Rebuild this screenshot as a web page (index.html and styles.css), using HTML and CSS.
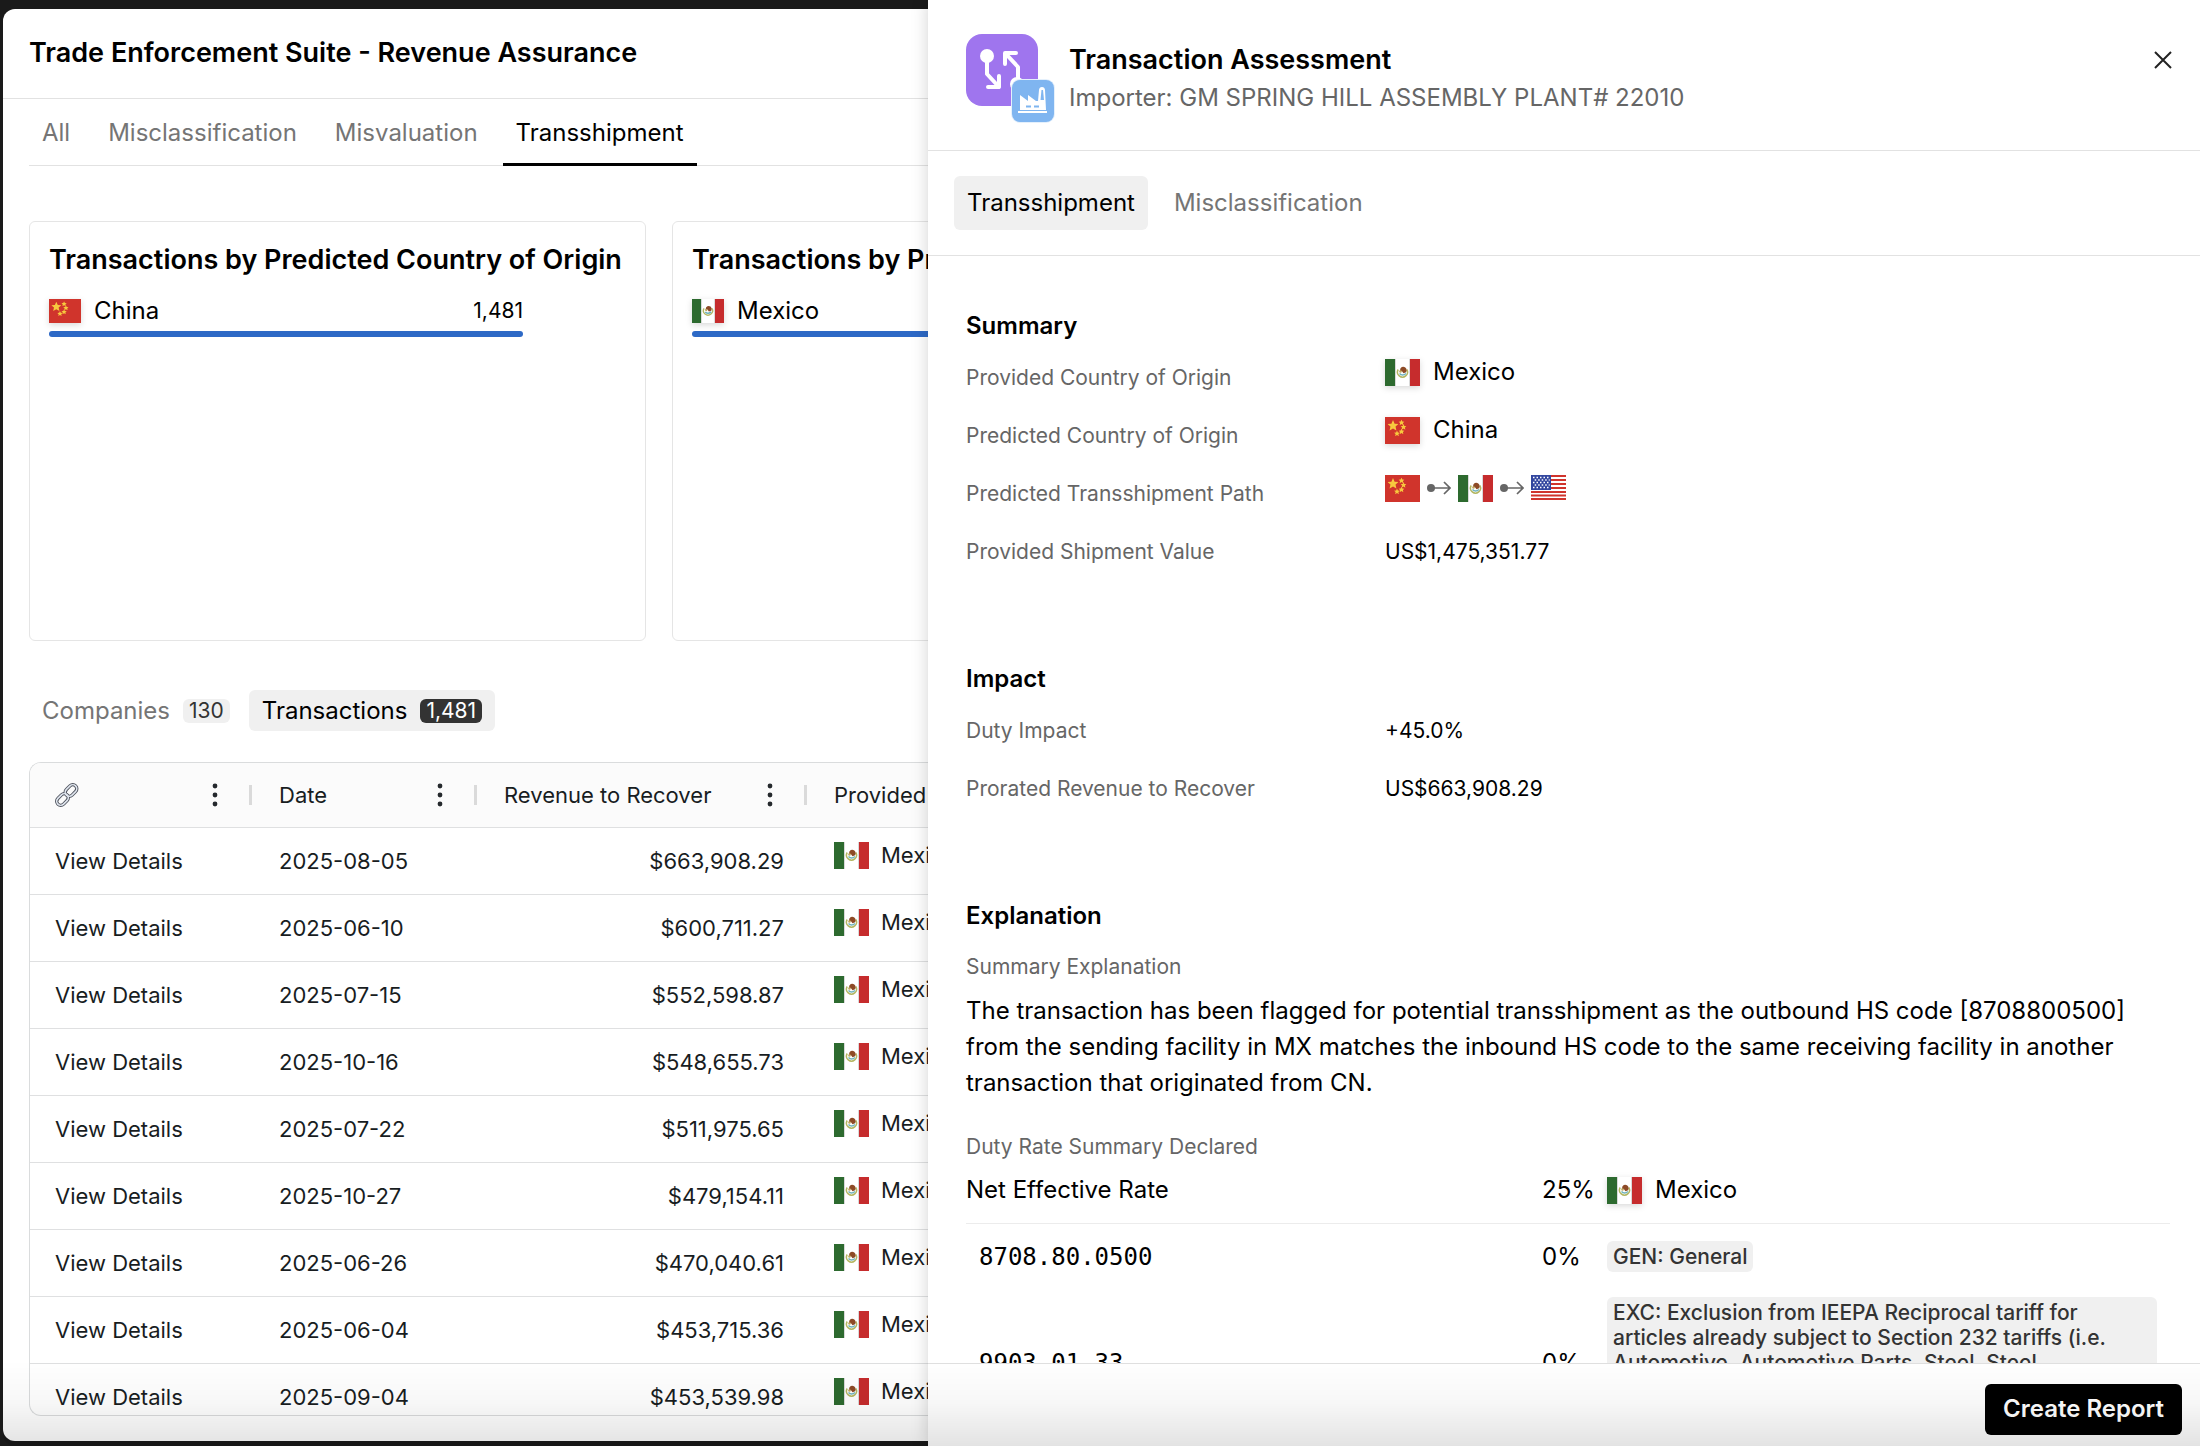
FILE: index.html
```html
<!DOCTYPE html>
<html lang="en">
<head>
<meta charset="utf-8">
<title>Trade Enforcement Suite - Revenue Assurance</title>
<link rel="stylesheet" href="styles.css">
</head>
<body>
<svg class="defs" aria-hidden="true">
  <symbol id="flag-mx" viewBox="0 0 35 27" preserveAspectRatio="none">
    <path fill="#fff" d="M0 0h35v27H0z"/>
    <path fill="#2d6a2f" d="M0 0h10v27H0z"/>
    <path fill="#c62c2d" d="M25 0h10v27H25z"/>
    <path d="M10 0h1v27h-1zM24 0h1v27h-1z" fill="#d9d9d9"/>
    <path d="M13.200 10.500a5 5 0 1 0 8.600 0" fill="none" stroke="#b3b661" stroke-width="1.500"/>
    <path d="M14.500 14.500q3 3 6.500 0" fill="none" stroke="#6fb3bd" stroke-width="1.600"/>
    <path d="M15.500 9.200q2.200-2.400 4.800-.8 2.200 2 .8 4.800l-2.600 1-1.700-2.300-2 .3z" fill="#8d4a26"/>
    <circle cx="15.500" cy="12.500" r="1.300" fill="#c0a860"/>
  </symbol>
  <symbol id="star" viewBox="0 0 20 20"><path fill="#f7c93e" d="M10 0l2.900 6.600 7.100.7-5.400 4.700 1.600 7L10 15.300 3.800 19l1.600-7L0 7.300l7.100-.7z"/></symbol>
  <symbol id="flag-cn" viewBox="0 0 35 27" preserveAspectRatio="none">
    <path fill="#d0342c" d="M0 0h35v27H0z"/>
    <use href="#star" x="2.500" y="3" width="11" height="11"/>
    <use href="#star" x="13.500" y="2.500" width="6" height="6"/>
    <use href="#star" x="15.500" y="7" width="6" height="6"/>
    <use href="#star" x="13.500" y="11.500" width="6" height="6"/>
    <use href="#star" x="9" y="13.500" width="6" height="6"/>
  </symbol>
  <symbol id="flag-us" viewBox="0 0 35 27" preserveAspectRatio="none">
    <path fill="#fff" d="M0 0h35v25H0z"/>
    <path stroke="#d0342c" stroke-width="2" d="M0 1h35M0 5h35M0 9h35M0 13h35M0 17h35M0 20.500h35M0 24h35"/>
    <path fill="#33479f" d="M0 0h20v15H0z"/>
    <path stroke="#fff" stroke-width="1.400" stroke-dasharray="1.500 2" d="M2 2.500h17M3.700 5h15M2 7.500h17M3.700 10h15M2 12.500h17"/>
  </symbol>
  <symbol id="hop" viewBox="0 0 24 16">
    <circle cx="4" cy="8" r="4" fill="#666"/>
    <path d="M4 8h19M17 2l6 6-6 6" fill="none" stroke="#666" stroke-width="1.700"/>
  </symbol>
  <symbol id="dots" viewBox="0 0 6 24"><g fill="#25292d"><circle cx="3" cy="3" r="2.400"/><circle cx="3" cy="12" r="2.400"/><circle cx="3" cy="21" r="2.400"/></g></symbol>
</svg>

<main class="app">
  <header class="app-header"><h1 class="title">Trade Enforcement Suite - Revenue Assurance</h1></header>
  <div class="app-body">
    <nav class="tabs">
      <a class="tab" href="#all">All</a>
      <a class="tab" href="#misclassification">Misclassification</a>
      <a class="tab" href="#misvaluation">Misvaluation</a>
      <a class="tab tab-active" href="#transshipment">Transshipment</a>
    </nav>
    <section class="cards">
      <article class="card">
        <h2 class="title">Transactions by Predicted Country of Origin</h2>
        <div class="stat">
          <div class="stat-row"><svg class="flag flag-small shade"><use href="#flag-cn"/></svg><span>China</span><span class="stat-count">1,481</span></div>
          <div class="bar"></div>
        </div>
      </article>
      <article class="card">
        <h2 class="title">Transactions by Provided Country of Origin</h2>
        <div class="stat">
          <div class="stat-row"><svg class="flag flag-small shade"><use href="#flag-mx"/></svg><span>Mexico</span></div>
          <div class="bar"></div>
        </div>
      </article>
    </section>
    <div class="views">
      <button class="view" type="button">Companies <span class="count">130</span></button>
      <button class="view view-active" type="button">Transactions <span class="count count-dark">1,481</span></button>
    </div>
    <div class="grid">
      <table>
        <colgroup><col class="c-link"><col class="c-date"><col class="c-rev"><col></colgroup>
        <thead>
          <tr>
            <th><div class="head"><svg class="link" viewBox="0 0 24 24" role="img" aria-label="Link"><g fill="none" stroke="#50545e" stroke-width="3.400"><rect x="9.500" y="3.500" width="13" height="8" rx="4" transform="rotate(-45 16 7.500)"/><rect x="1" y="12.500" width="13" height="8" rx="4" transform="rotate(-45 7.500 16.500)"/></g><g fill="none" stroke="#dfe5ee" stroke-width="1.600"><rect x="9.500" y="3.500" width="13" height="8" rx="4" transform="rotate(-45 16 7.500)"/><rect x="1" y="12.500" width="13" height="8" rx="4" transform="rotate(-45 7.500 16.500)"/></g></svg><svg class="dots"><use href="#dots"/></svg></div></th>
            <th><div class="head">Date<svg class="dots"><use href="#dots"/></svg></div></th>
            <th><div class="head">Revenue to Recover<svg class="dots"><use href="#dots"/></svg></div></th>
            <th><div class="head">Provided Country of Origin</div></th>
          </tr>
        </thead>
        <tbody>
          <tr><td><a href="#t1">View Details</a></td><td>2025-08-05</td><td class="num">$663,908.29</td><td><div class="country"><svg class="flag"><use href="#flag-mx"/></svg>Mexico</div></td></tr>
          <tr><td><a href="#t2">View Details</a></td><td>2025-06-10</td><td class="num">$600,711.27</td><td><div class="country"><svg class="flag"><use href="#flag-mx"/></svg>Mexico</div></td></tr>
          <tr><td><a href="#t3">View Details</a></td><td>2025-07-15</td><td class="num">$552,598.87</td><td><div class="country"><svg class="flag"><use href="#flag-mx"/></svg>Mexico</div></td></tr>
          <tr><td><a href="#t4">View Details</a></td><td>2025-10-16</td><td class="num">$548,655.73</td><td><div class="country"><svg class="flag"><use href="#flag-mx"/></svg>Mexico</div></td></tr>
          <tr><td><a href="#t5">View Details</a></td><td>2025-07-22</td><td class="num">$511,975.65</td><td><div class="country"><svg class="flag"><use href="#flag-mx"/></svg>Mexico</div></td></tr>
          <tr><td><a href="#t6">View Details</a></td><td>2025-10-27</td><td class="num">$479,154.11</td><td><div class="country"><svg class="flag"><use href="#flag-mx"/></svg>Mexico</div></td></tr>
          <tr><td><a href="#t7">View Details</a></td><td>2025-06-26</td><td class="num">$470,040.61</td><td><div class="country"><svg class="flag"><use href="#flag-mx"/></svg>Mexico</div></td></tr>
          <tr><td><a href="#t8">View Details</a></td><td>2025-06-04</td><td class="num">$453,715.36</td><td><div class="country"><svg class="flag"><use href="#flag-mx"/></svg>Mexico</div></td></tr>
          <tr><td><a href="#t9">View Details</a></td><td>2025-09-04</td><td class="num">$453,539.98</td><td><div class="country"><svg class="flag"><use href="#flag-mx"/></svg>Mexico</div></td></tr>
        </tbody>
      </table>
    </div>
  </div>
</main>

<aside class="panel">
  <header class="panel-header">
    <svg class="logo" viewBox="0 0 90 90" aria-hidden="true">
      <rect width="72" height="72" rx="16" fill="#9f75ee"/>
      <g fill="none" stroke="#fff" stroke-width="4" stroke-linejoin="round" stroke-linecap="round">
        <path d="M21 24v16l12 13M22 53h11V42"/>
        <path d="M52 46V33L40 20M39 30V19h11"/>
      </g>
      <circle cx="21" cy="22" r="7" fill="#fff"/><circle cx="51" cy="50" r="7" fill="#fff"/>
      <rect x="45" y="45" width="44" height="44" rx="9" fill="#e4f0fc"/>
      <rect x="46" y="46" width="42" height="42" rx="8" fill="#7fb5f0"/>
      <path d="M54 76V61l8 6v-6l8 6h2l1-11q.3-3 3-3t3 3l1 20z" fill="#fff"/>
      <path d="M74.500 66l1-10h1.500l1 10z" fill="#7fb5f0"/>
      <path d="M52 78h29" stroke="#fff" stroke-width="2"/>
      <path d="M60 72.500h5M68 72.500h5" stroke="#7fb5f0" stroke-width="2"/>
    </svg>
    <div class="panel-titles">
      <h2 class="title">Transaction Assessment</h2>
      <p class="subtitle">Importer: GM SPRING HILL ASSEMBLY PLANT# 22010</p>
    </div>
    <button class="close" type="button" aria-label="Close"><svg viewBox="0 0 18 18"><path d="M1 1l16 16M17 1L1 17" stroke="#222" stroke-width="2" fill="none"/></svg></button>
  </header>
  <nav class="panel-tabs">
    <a class="pill pill-active" href="#p-transshipment">Transshipment</a>
    <a class="pill" href="#p-misclassification">Misclassification</a>
  </nav>
  <div class="panel-body">
    <section class="block">
      <h3>Summary</h3>
      <dl>
        <dt>Provided Country of Origin</dt><dd class="country"><svg class="flag shade"><use href="#flag-mx"/></svg>Mexico</dd>
        <dt>Predicted Country of Origin</dt><dd class="country"><svg class="flag shade"><use href="#flag-cn"/></svg>China</dd>
        <dt>Predicted Transshipment Path</dt><dd class="path"><svg class="flag"><use href="#flag-cn"/></svg><svg class="hop"><use href="#hop"/></svg><svg class="flag"><use href="#flag-mx"/></svg><svg class="hop"><use href="#hop"/></svg><svg class="flag"><use href="#flag-us"/></svg></dd>
        <dt>Provided Shipment Value</dt><dd>US$1,475,351.77</dd>
      </dl>
    </section>
    <section class="block">
      <h3>Impact</h3>
      <dl>
        <dt>Duty Impact</dt><dd>+45.0%</dd>
        <dt>Prorated Revenue to Recover</dt><dd>US$663,908.29</dd>
      </dl>
    </section>
    <section class="block">
      <h3>Explanation</h3>
      <h4>Summary Explanation</h4>
      <p class="prose">The transaction has been flagged for potential transshipment as the outbound HS code [8708800500] from the sending facility in MX matches the inbound HS code to the same receiving facility in another transaction that originated from CN.</p>
      <h4>Duty Rate Summary Declared</h4>
      <table class="rates">
        <colgroup><col><col class="c-rate"><col class="c-note"></colgroup>
        <thead><tr><th scope="row">Net Effective Rate</th><td>25%</td><td><div class="country"><svg class="flag shade"><use href="#flag-mx"/></svg>Mexico</div></td></tr></thead>
        <tbody>
          <tr><td class="code">8708.80.0500</td><td>0%</td><td><span class="tag">GEN: General</span></td></tr>
          <tr><td class="code">9903.01.33</td><td>0%</td><td><span class="tag">EXC: Exclusion from IEEPA Reciprocal tariff for articles already subject to Section 232 tariffs (i.e. Automotive, Automotive Parts, Steel, Steel Derivatives, Aluminum, Aluminum Derivatives, Copper, Timber and Lumber products)</span></td></tr>
        </tbody>
      </table>
    </section>
  </div>
  <footer class="panel-footer"><button class="primary" type="button">Create Report</button></footer>
</aside>
</body>
</html>
```
FILE: styles.css
```css
* { box-sizing: border-box; }
body {
  margin: 0;
  height: 100vh;
  overflow: hidden;
  display: grid;
  grid-template-columns: 928px minmax(0, 1fr);
  background: #1a1a1a;
  color: #000;
  font: 400 24px/32px Inter, "Liberation Sans", sans-serif;
}
/* soft shade along the bottom edge of the window */
body::after {
  content: "";
  position: fixed;
  inset: auto 0 0 3px;
  height: 86px;
  border-bottom-left-radius: 12px;
  background: linear-gradient(rgb(0 0 0 / 0), rgb(0 0 0 / 0.03) 50%, rgb(0 0 0 / 0.11));
  pointer-events: none;
}
h1, h2, h3, h4, p, dl, dd { margin: 0; }
a { color: inherit; text-decoration: none; }
button { font: inherit; border: 0; cursor: pointer; }
svg { flex: none; display: block; }
table { border-collapse: separate; border-spacing: 0; table-layout: fixed; }
.defs { position: absolute; width: 0; height: 0; }
.title { font-size: 27px; font-weight: 600; line-height: 36px; white-space: nowrap; }
.flag { width: 35px; height: 27px; }
.flag-small { width: 32px; height: 24px; }
.shade { filter: drop-shadow(0 2px 3px rgb(0 0 0 / 0.15)); }
.country { display: flex; align-items: center; gap: 13px; font-size: 24px; }

/* main window */
.app {
  margin: 9px 0 5px 3px;
  background: #fff;
  border-radius: 12px 0 0 12px;
  overflow: hidden;
  min-height: 0;
  display: flex;
  flex-direction: column;
}
.app-header { padding: 26px 26px 27px; border-bottom: 1px solid #e2e2e2; }
.app-body { flex: 1; min-height: 0; display: flex; flex-direction: column; padding: 0 0 25px 26px; }
.tabs { display: flex; gap: 12px; border-bottom: 1px solid #e2e2e2; }
.tab { padding: 18px 13px 14px; color: #757575; border-bottom: 3px solid transparent; margin-bottom: -1px; }
.tab-active { color: #000; border-color: #000; }
.cards { display: flex; gap: 26px; margin-top: 55px; }
.card { flex: none; width: 617px; height: 420px; padding: 20px 19px; border: 1px solid #e5e5e5; border-radius: 6px; }
.stat { width: 474px; margin-top: 17px; }
.stat-row { display: flex; align-items: center; gap: 13px; }
.stat-count { margin-left: auto; font-size: 21px; }
.bar { height: 6px; border-radius: 3px; background: #2d69c6; margin-top: 4px; }
.views { display: flex; gap: 6px; margin-top: 49px; }
.view { display: flex; align-items: center; gap: 13px; height: 41px; padding: 0 13px; border-radius: 6px; background: none; color: #757575; }
.view-active { background: #f0f0f0; color: #000; }
.count { padding: 0 6px; border-radius: 6px; background: #f0f0f0; color: #333; font-size: 21px; line-height: 24px; }
.count-dark { background: #333; color: #fff; }
.grid { flex: 1; min-height: 0; margin-top: 31px; overflow: hidden; border: 1px solid #dadcdd; border-right: 0; border-radius: 12px 0 0 12px; color: #181d1f; font-size: 22px; }
.grid table { width: 1100px; }
.c-link { width: 224px; }
.c-date { width: 225px; }
.c-rev { width: 330px; }
.grid th, .grid td { padding: 0 25px; text-align: left; border-bottom: 1px solid #dfe0e1; white-space: nowrap; }
.grid th { height: 65px; padding-right: 0; background: #fbfbfb; font-weight: 400; }
.grid td { height: 67px; }
.grid .num { text-align: right; }
.grid .country { font-size: 22px; gap: 12px; padding-bottom: 12px; }
.head { display: flex; align-items: center; justify-content: space-between; height: 20px; padding-right: 31px; border-right: 3px solid #dadada; margin-right: 2px; }
.link { width: 24px; height: 24px; }
.dots { width: 6px; height: 24px; }

/* detail panel */
.panel {
  min-height: 0;
  display: flex;
  flex-direction: column;
  background: #fff;
  box-shadow: 0 0 16px rgb(0 0 0 / 0.18);
}
.panel-header { display: flex; padding: 34px 25px 26px 38px; height: 151px; border-bottom: 1px solid #e2e2e2; }
.logo { width: 90px; height: 90px; }
.panel-titles { flex: 1; padding: 8px 0 0 13px; }
.subtitle { color: #666; line-height: 40px; }
.close { align-self: flex-start; padding: 17px 3px; background: none; }
.close svg { width: 18px; height: 18px; }
.panel-tabs { display: flex; gap: 13px; padding: 25px 26px; border-bottom: 1px solid #e2e2e2; }
.pill { padding: 11px 13px; border-radius: 6px; color: #757575; }
.pill-active { background: #f0f0f0; color: #000; }
.panel-body { flex: 1; min-height: 0; overflow: hidden; padding: 54px 30px 0 38px; }
.block { margin-bottom: 95px; }
h3 { font-size: 24px; font-weight: 600; }
h4, dt { font-size: 21px; font-weight: 400; color: #666; }
dl { display: grid; grid-template-columns: 419px 1fr; row-gap: 26px; margin-top: 20px; }
dd { font-size: 21px; }
dd.country, dd.path { padding-bottom: 12px; height: 32px; }
.path { display: flex; align-items: center; gap: 7px; }
.hop { width: 24px; height: 16px; }
h4 { margin-top: 19px; }
.prose { margin: 10px 0 30px; line-height: 36px; }
.rates { width: 100%; margin-top: 11px; }
.rates th, .rates td { padding: 12px 13px 12px 0; text-align: left; font-weight: 400; }
.rates thead th, .rates thead td { padding: 0 0 17px; border-bottom: 1px solid #ececec; }
.rates tbody tr:first-child td { padding-top: 17px; }
.rates tbody .code { padding-left: 13px; font-family: "DejaVu Sans Mono", monospace; }
.c-rate { width: 65px; }
.c-note { width: 563px; }
.tag { display: inline-block; padding: 3px 6px; border-radius: 6px; background: #f0f0f0; color: #333; font-size: 21px; font-weight: 500; line-height: 25px; vertical-align: top; }
.panel-footer { display: flex; justify-content: flex-end; padding: 20px 18px 11px; border-top: 1px solid #e0e0e0; }
.primary { padding: 9px 18px 10px; border-radius: 6px; background: #000; color: #fff; font-weight: 600; }
```
